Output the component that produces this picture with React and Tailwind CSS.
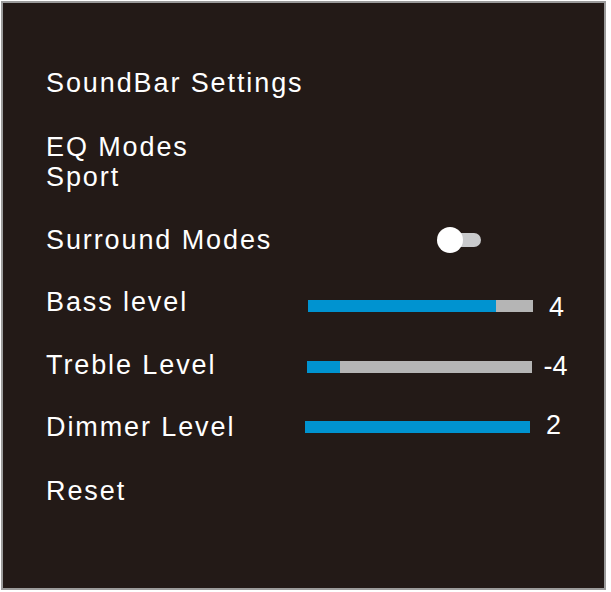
import React from "react";

function Slider({ labelClass = "", barMl, barMt, blueW, numMt, value, fullBlue }) {
  return (
    <div className="flex items-start h-[30px]">
      <span className={"w-[261px] shrink-0 " + labelClass}>{LABELS[value.key]}</span>
      <div className={"flex shrink-0 h-[12px] w-[225px] bg-[#b5b5b5] " + barMl + " " + barMt}>
        <div className={"h-full bg-[#0093d0] " + blueW} />
      </div>
      <span className={"w-[47px] shrink-0 text-center tracking-normal " + numMt}>{value.num}</span>
    </div>
  );
}

const LABELS = { bass: "Bass level", treble: "Treble Level", dimmer: "Dimmer Level" };

export default function App() {
  return (
    <div className="w-[611px] h-[592px] bg-white">
      <div className="ml-px mt-px w-[605px] h-[589px] border-2 border-[#9b9b9b] bg-[#231a17] pl-[43px] pt-[65px] text-white text-[27px] leading-[30px] tracking-[1.9px] font-['Liberation_Sans',Arial,sans-serif]">
        <div>SoundBar Settings</div>
        <div className="mt-[34.4px]">EQ Modes</div>
        <div>Sport</div>
        <div className="mt-[32.5px] flex items-start h-[30px]">
          <span className="w-[391px] shrink-0">Surround Modes</span>
          <div className="relative mt-[2.5px] w-[44px] h-[26px] shrink-0">
            <div className="absolute right-0 top-[5.5px] w-[36px] h-[14px] rounded-full bg-[#c9cacc]" />
            <div className="absolute left-0 top-0 w-[26px] h-[26px] rounded-full bg-white" />
          </div>
        </div>
        <div className="mt-[32.5px]">
          <Slider barMl="ml-[1px]" barMt="mt-[12.7px]" blueW="w-[188px]" numMt="mt-[5px]" value={{ key: "bass", num: "4" }} />
        </div>
        <div className="mt-[32.5px]">
          <Slider barMl="ml-0" barMt="mt-[11.2px]" blueW="w-[33px]" numMt="mt-[1.5px]" value={{ key: "treble", num: "-4" }} />
        </div>
        <div className="mt-[32.5px]">
          <Slider barMl="ml-[-2px]" barMt="mt-[8.7px]" blueW="w-full" numMt="mt-[-2.7px]" value={{ key: "dimmer", num: "2" }} />
        </div>
        <div className="mt-[33.3px]">Reset</div>
      </div>
    </div>
  );
}
